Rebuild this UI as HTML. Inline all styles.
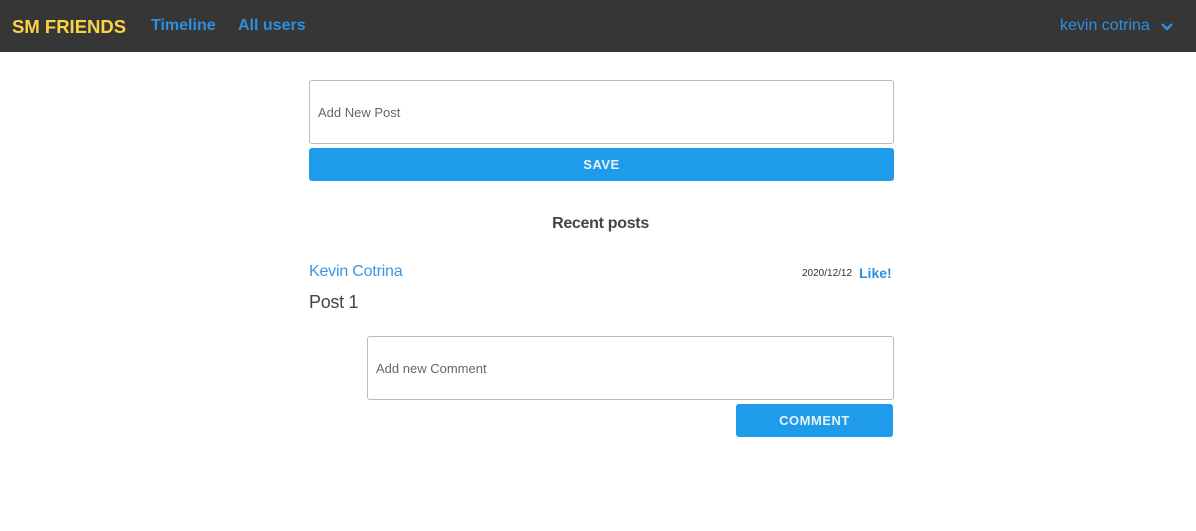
<!DOCTYPE html><html><head><style>
body{margin:0;width:1196px;height:531px;background:#fff;font-family:"Liberation Sans",sans-serif;position:relative;overflow:hidden}
.nav{position:absolute;left:0;top:0;width:1196px;height:52px;background:#363636}
.a{position:absolute;font-weight:bold;font-size:16px;top:17px}
.box{position:absolute;border:1px solid #bbb;border-radius:3px;box-sizing:border-box;font-size:13px;color:#666;padding-left:8px;display:flex;align-items:center}
.btn{position:absolute;background:#1f9bec;border-radius:3px;color:#e8f0f8;font-weight:bold;font-size:13px;display:flex;align-items:center;justify-content:center;letter-spacing:.5px}
</style></head><body>
<div class="nav">
<div class="a" style="left:12px;color:#fdd346;font-size:18.5px;top:16px">SM FRIENDS</div>
<div class="a" style="left:151px;color:#2f8fdf">Timeline</div>
<div class="a" style="left:238px;color:#2f8fdf">All users</div>
<div style="position:absolute;left:1060px;top:17px;color:#2f8fdf;font-size:16px">kevin cotrina</div>
<svg style="position:absolute;left:1160px;top:22px" width="14" height="10"><path d="M2 2l5 5 5-5" stroke="#2f8fdf" stroke-width="2.5" fill="none"/></svg>
</div>
<div class="box" style="left:309px;top:80px;width:585px;height:64px">Add New Post</div>
<div class="btn" style="left:309px;top:148px;width:585px;height:33px">SAVE</div>
<div style="position:absolute;left:0;width:1201px;text-align:center;top:215px;font-weight:bold;font-size:16px;color:#444;letter-spacing:-.3px">Recent posts</div>
<div style="position:absolute;left:309px;top:263px;color:#3a95e6;font-size:16px;letter-spacing:-.2px">Kevin Cotrina</div>
<div style="position:absolute;left:802px;top:268px;font-size:10px;color:#333">2020/12/12</div>
<div style="position:absolute;left:859px;top:265px;font-size:14px;font-weight:bold;color:#2f8fdf">Like!</div>
<div style="position:absolute;left:309px;top:292px;font-size:18px;color:#444;letter-spacing:-.3px">Post 1</div>
<div class="box" style="left:367px;top:336px;width:527px;height:64px">Add new Comment</div>
<div class="btn" style="left:736px;top:404px;width:157px;height:33px">COMMENT</div>
</body></html>
